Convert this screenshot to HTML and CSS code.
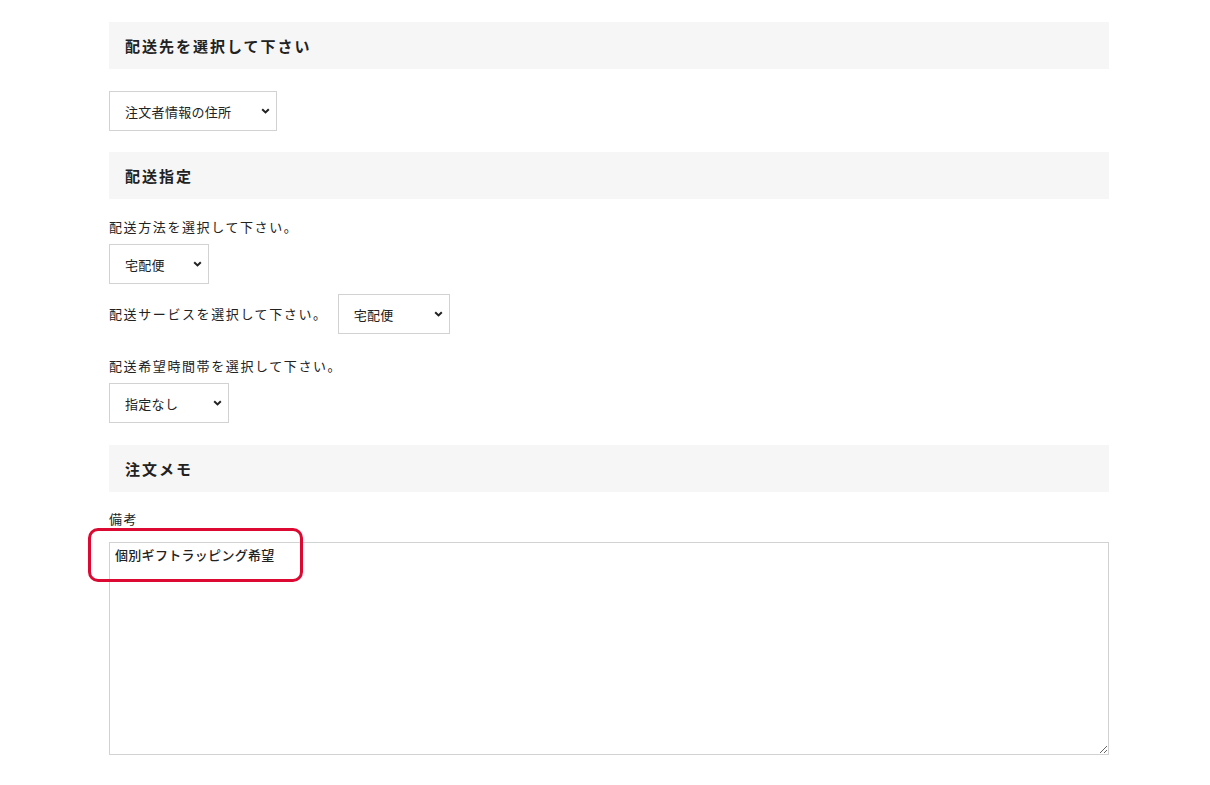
FILE: index.html
```html
<!DOCTYPE html>
<html lang="ja">
<head>
<meta charset="utf-8">
<title>配送</title>
<link rel="stylesheet" href="styles.css">
</head>
<body>
<div class="page">
  <section class="block">
    <h2 class="heading">配送先を選択して下さい</h2>
    <div class="field first">
      <span class="select-wrap w168">
        <select class="select"><option>注文者情報の住所</option></select>
        <svg class="chev" viewBox="0 0 9 6" width="9" height="6"><path d="M1.2 1.2 L4.5 4.4 L7.8 1.2" fill="none" stroke="#222" stroke-width="2"/></svg>
      </span>
    </div>
  </section>

  <section class="block block-delivery">
    <h2 class="heading">配送指定</h2>
    <p class="label first-label">配送方法を選択して下さい。</p>
    <div class="field">
      <span class="select-wrap w100">
        <select class="select"><option>宅配便</option></select>
        <svg class="chev" viewBox="0 0 9 6" width="9" height="6"><path d="M1.2 1.2 L4.5 4.4 L7.8 1.2" fill="none" stroke="#222" stroke-width="2"/></svg>
      </span>
    </div>
    <div class="row">
      <span class="label inline">配送サービスを選択して下さい。</span>
      <span class="select-wrap w112">
        <select class="select"><option>宅配便</option></select>
        <svg class="chev" viewBox="0 0 9 6" width="9" height="6"><path d="M1.2 1.2 L4.5 4.4 L7.8 1.2" fill="none" stroke="#222" stroke-width="2"/></svg>
      </span>
    </div>
    <p class="label">配送希望時間帯を選択して下さい。</p>
    <div class="field">
      <span class="select-wrap w120">
        <select class="select"><option>指定なし</option></select>
        <svg class="chev" viewBox="0 0 9 6" width="9" height="6"><path d="M1.2 1.2 L4.5 4.4 L7.8 1.2" fill="none" stroke="#222" stroke-width="2"/></svg>
      </span>
    </div>
  </section>

  <section class="block">
    <h2 class="heading">注文メモ</h2>
    <p class="label memo-label">備考</p>
    <div class="memo">
      <textarea class="textarea">個別ギフトラッピング希望</textarea>
      <span class="highlight"></span>
    </div>
  </section>
</div>
</body>
</html>
```

FILE: styles.css
```css
html, body {
  margin: 0;
  padding: 0;
  background: #fff;
}

body {
  font-family: "Noto Sans CJK JP", "Noto Sans", sans-serif;
  color: #222;
}

.page {
  width: 1000px;
  margin-left: 109px;
  padding-top: 22px;
}

.block {
  margin-bottom: 21px;
}

.block-delivery {
  margin-bottom: 22px;
}

.heading {
  margin: 0;
  height: 47px;
  display: flex;
  align-items: center;
  padding-left: 16px;
  background: #f6f6f6;
  font-size: 15px;
  font-weight: 700;
  letter-spacing: 2px;
}

.field {
  display: flex;
}

.field.first {
  margin-top: 22px;
}

.label {
  margin: 0;
  font-size: 13px;
  line-height: 20px;
  letter-spacing: 1.6px;
}

.first-label {
  margin-top: 18px;
  margin-bottom: 7px;
}

.row {
  display: flex;
  align-items: center;
  margin-top: 10px;
  margin-bottom: 22px;
}

.row + .label {
  margin-bottom: 7px;
}

.label.inline {
  margin-right: 10px;
}

.select-wrap {
  position: relative;
  display: inline-block;
  height: 40px;
}

.w168 { width: 168px; }
.w100 { width: 100px; }
.w112 { width: 112px; }
.w120 { width: 120px; }

.select {
  -webkit-appearance: none;
  appearance: none;
  box-sizing: border-box;
  width: 100%;
  height: 40px;
  margin: 0;
  padding: 0 20px 0 15px;
  border: 1px solid #d2d2d2;
  border-radius: 0;
  background: #fff;
  font-family: "Noto Sans CJK JP", "Noto Sans", sans-serif;
  font-size: 13px;
  letter-spacing: 0.3px;
  color: #222;
  outline: none;
}

.chev {
  position: absolute;
  right: 7px;
  top: 17px;
  pointer-events: none;
}

.memo-label {
  margin-top: 17px;
  margin-bottom: 13px;
}

.memo {
  position: relative;
}

.textarea {
  display: block;
  box-sizing: border-box;
  width: 1000px;
  height: 213px;
  margin: 0;
  padding: 4px 5px;
  border: 1px solid #d2d2d2;
  border-radius: 0;
  font-family: "Noto Sans CJK JP", "Noto Sans", sans-serif;
  font-size: 13px;
  font-weight: 500;
  letter-spacing: 0.3px;
  line-height: 16px;
  color: #222;
  resize: both;
  outline: none;
}

.highlight {
  position: absolute;
  left: -21px;
  top: -14px;
  width: 215px;
  height: 54px;
  box-sizing: border-box;
  border: 3px solid #dc0a32;
  border-radius: 10px;
  pointer-events: none;
}
```
